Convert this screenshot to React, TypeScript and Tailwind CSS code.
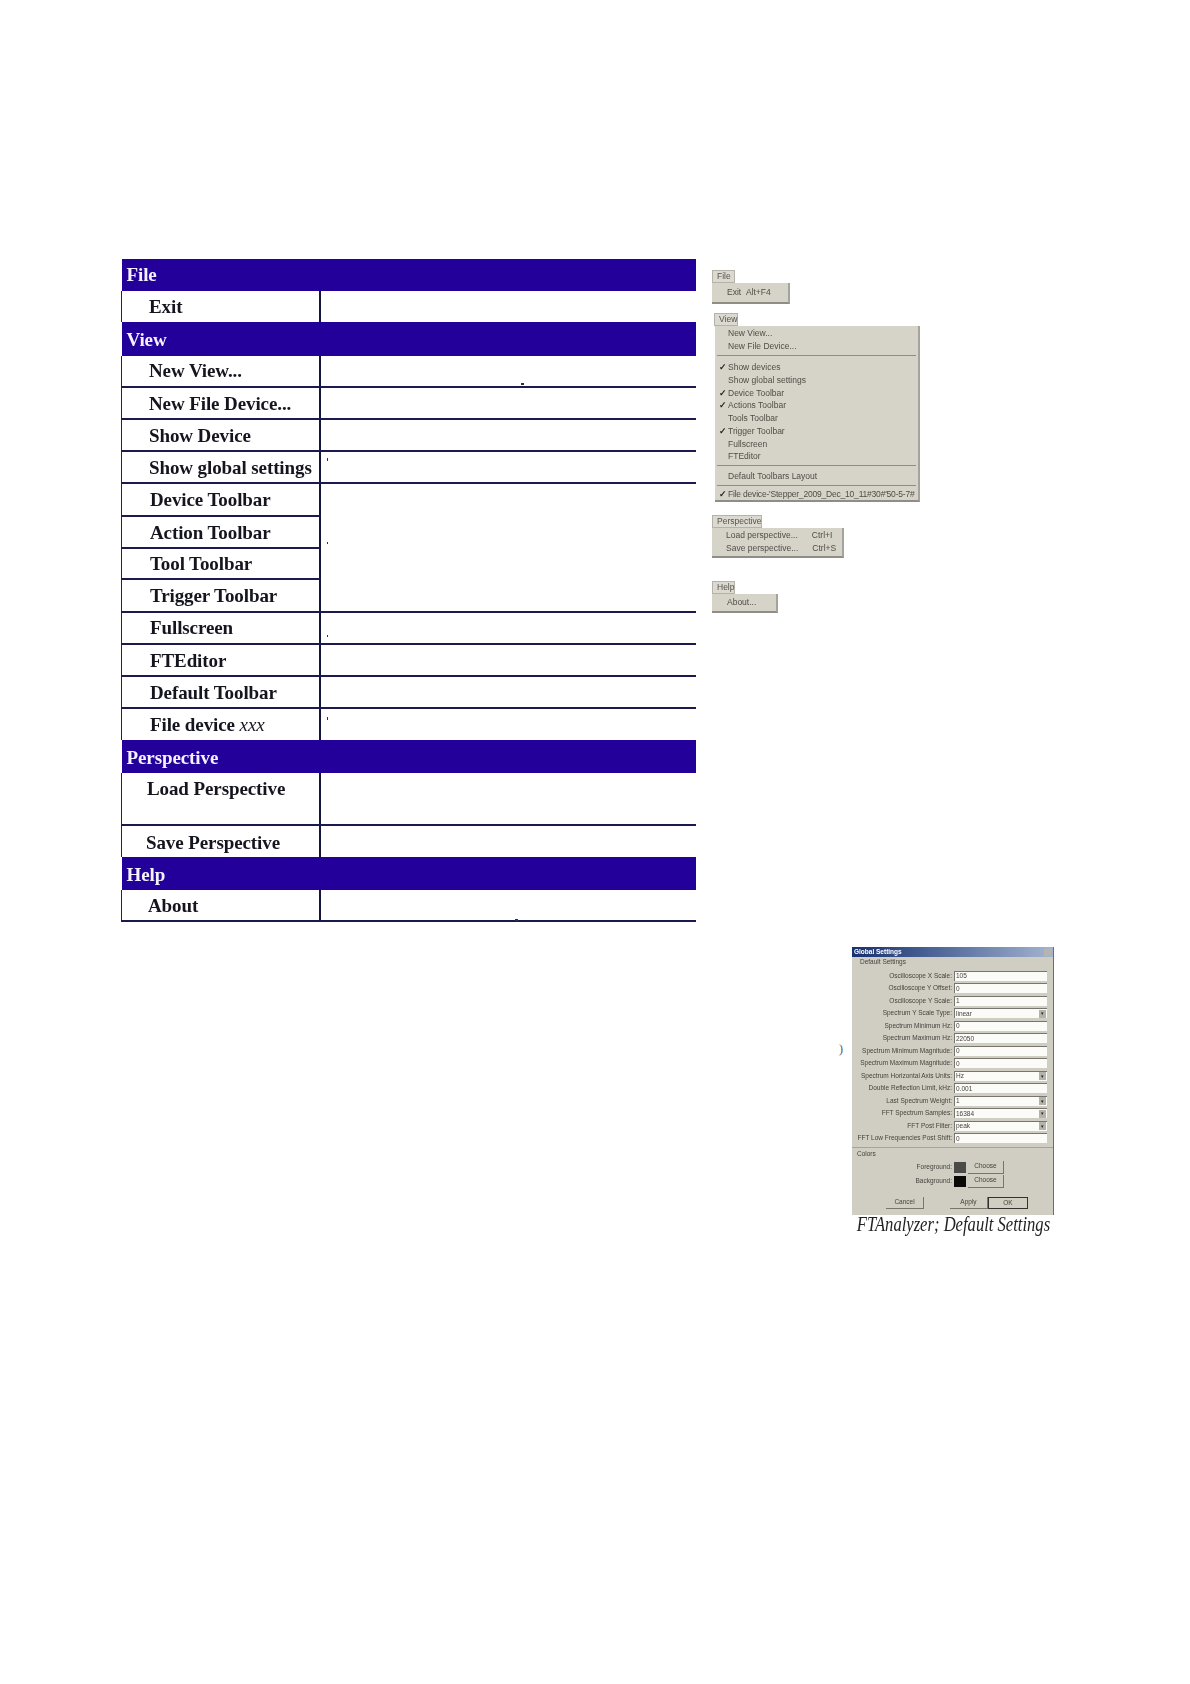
import React from "react";

const serif = "font-['Liberation_Serif',serif]";

type Row = { label: React.ReactNode; h: string; pad: string; header?: boolean; span?: number; skip?: boolean; line?: boolean; top?: boolean };

const rows: Row[] = [
  { label: "File", h: "h-[32px]", pad: "pl-[5px] pb-[2px]", header: true },
  { label: "Exit", h: "h-[31px]", pad: "pl-[27px]" },
  { label: "View", h: "h-[34px]", pad: "pl-[5px]", header: true },
  { label: "New View...", h: "h-[31px]", pad: "pl-[27px] pb-[2px]", line: true },
  { label: "New File Device...", h: "h-[32px]", pad: "pl-[27px]", line: true },
  { label: "Show Device", h: "h-[32px]", pad: "pl-[27px]", line: true },
  { label: "Show global settings", h: "h-[32px]", pad: "pl-[27px]", line: true },
  { label: "Device Toolbar", h: "h-[33px]", pad: "pl-[28px]", line: true, span: 4 },
  { label: "Action Toolbar", h: "h-[32px]", pad: "pl-[28px]", line: true, skip: true },
  { label: "Tool Toolbar", h: "h-[31px]", pad: "pl-[28px]", line: true, skip: true },
  { label: "Trigger Toolbar", h: "h-[33px]", pad: "pl-[28px]", line: true, skip: true },
  { label: "Fullscreen", h: "h-[32px]", pad: "pl-[28px] pb-[1px]", line: true },
  { label: "FTEditor", h: "h-[32px]", pad: "pl-[28px]", line: true },
  { label: "Default Toolbar", h: "h-[32px]", pad: "pl-[28px]", line: true },
  { label: <>File device <i className="font-normal">xxx</i></>, h: "h-[32px]", pad: "pl-[28px]" },
  { label: "Perspective", h: "h-[33px]", pad: "pl-[5px] pt-[2px]", header: true },
  { label: "Load Perspective", h: "h-[52px]", pad: "pl-[25px]", line: true, top: true },
  { label: "Save Perspective", h: "h-[32px]", pad: "pl-[24px] pt-[2px]" },
  { label: "Help", h: "h-[33px]", pad: "pl-[5px] pt-[2px]", header: true },
  { label: "About", h: "h-[31px]", pad: "pl-[26px] pt-[1px]", line: true },
];

function MenuTable() {
  return (
    <div className="relative">
      <table className={`w-[575px] table-fixed border-collapse whitespace-nowrap text-[19px] font-bold leading-none tracking-[-0.1px] text-[#15151f] blur-[0.5px] ${serif}`}>
        <colgroup>
          <col className="w-[198px]" />
          <col />
        </colgroup>
        <tbody>
          {rows.map((r, i) =>
            r.header ? (
              <tr key={i} className={r.h}>
                <td colSpan={2} className={`bg-[#24009a] text-[#f4f2ff] ${r.pad}`}>{r.label}</td>
              </tr>
            ) : (
              <tr key={i} className={r.h}>
                <td className={`border-l border-r-2 border-l-[#1e1880] border-r-[#14143c] ${r.line ? "border-b-2 border-b-[#1a1a50]" : ""} ${r.top ? "align-top pt-[6px]" : ""} ${r.pad}`}>
                  {r.label}
                </td>
                {!r.skip && (
                  <td rowSpan={r.span} className={r.line || r.span ? "border-b-2 border-b-[#1a1a50]" : ""} />
                )}
              </tr>
            )
          )}
        </tbody>
      </table>
      {/* scan specks */}
      <span className="absolute left-[400px] top-[124px] h-[2px] w-[3px] bg-[#333]" />
      <span className="absolute left-[206px] top-[199px] h-[3px] w-px bg-[#333]" />
      <span className="absolute left-[206px] top-[283px] h-[2px] w-px bg-[#333]" />
      <span className="absolute left-[206px] top-[376px] h-[2px] w-px bg-[#333]" />
      <span className="absolute left-[206px] top-[458px] h-[3px] w-px bg-[#333]" />
      <span className="absolute left-[394px] top-[660px] h-[2px] w-[3px] bg-[#333]" />
    </div>
  );
}

function Tab({ label, w }: { label: string; w: string }) {
  return (
    <div className={`flex h-[13px] items-center border border-[#b5b2aa] bg-[#dcd9d0] pl-[4px] text-[8.5px] text-[#55534e] ${w}`}>{label}</div>
  );
}

function Shot({ children, cls }: { children: React.ReactNode; cls: string }) {
  return (
    <div className={`border-b-2 border-r-2 border-b-[#8f8d86] border-r-[#a5a39c] bg-[#d6d3c9] text-[8.5px] leading-[12.7px] text-[#4f4d46] ${cls}`}>
      {children}
    </div>
  );
}

const viewGroup1 = ["New View...", "New File Device..."];
const viewGroup2: [string, boolean][] = [
  ["Show devices", true],
  ["Show global settings", false],
  ["Device Toolbar", true],
  ["Actions Toolbar", true],
  ["Tools Toolbar", false],
  ["Trigger Toolbar", true],
  ["Fullscreen", false],
  ["FTEditor", false],
];

function Item({ label, checked }: { label: string; checked?: boolean }) {
  return (
    <div className="relative h-[12.7px] whitespace-nowrap pl-[13px]">
      {checked && <span className="absolute left-[4px] top-0 text-[9px] font-bold text-[#222]">✓</span>}
      {label}
    </div>
  );
}

function Menus() {
  return (
    <div className="ml-[16px] flex w-[215px] flex-col whitespace-nowrap pt-[11px] font-['Liberation_Sans',sans-serif] blur-[0.7px]">
      <Tab label="File" w="w-[23px]" />
      <Shot cls="h-[21px] w-[78px] pl-[15px] pt-[3px]">Exit &nbsp;Alt+F4</Shot>

      <div className="mt-[9px] ml-[2px]">
        <Tab label="View" w="w-[24px]" />
      </div>
      <Shot cls="ml-[3px] h-[176px] w-[205px] overflow-hidden pt-[1px]">
        {viewGroup1.map((l) => (
          <Item key={l} label={l} />
        ))}
        <div className="mx-[2px] my-[3px] h-px bg-[#8e8c85]" />
        <div className="pt-[2px]">
          {viewGroup2.map(([l, c]) => (
            <Item key={l} label={l} checked={c} />
          ))}
        </div>
        <div className="mx-[2px] my-[2px] h-px bg-[#8e8c85]" />
        <div className="pt-[2px]">
          <Item label="Default Toolbars Layout" />
        </div>
        <div className="mx-[2px] my-[2px] h-px bg-[#8e8c85]" />
        <div className="tracking-[-0.2px]">
          <Item label="File device-'Stepper_2009_Dec_10_11#30#'50-5-7#" checked />
        </div>
      </Shot>

      <div className="mt-[13px]">
        <Tab label="Perspective" w="w-[50px]" />
      </div>
      <Shot cls="h-[30px] w-[132px] pl-[14px] pt-[1px]">
        <div className="flex gap-[14px]"><span>Load perspective...</span><span>Ctrl+I</span></div>
        <div className="flex gap-[14px]"><span>Save perspective...</span><span>Ctrl+S</span></div>
      </Shot>

      <div className="mt-[23px]">
        <Tab label="Help" w="w-[23px]" />
      </div>
      <Shot cls="h-[19px] w-[66px] pl-[15px] pt-[2px]">About...</Shot>
    </div>
  );
}

const fields: [string, string, boolean][] = [
  ["Oscilloscope X Scale:", "105", false],
  ["Oscilloscope Y Offset:", "0", false],
  ["Oscilloscope Y Scale:", "1", false],
  ["Spectrum Y Scale Type:", "linear", true],
  ["Spectrum Minimum Hz:", "0", false],
  ["Spectrum Maximum Hz:", "22050", false],
  ["Spectrum Minimum Magnitude:", "0", false],
  ["Spectrum Maximum Magnitude:", "0", false],
  ["Spectrum Horizontal Axis Units:", "Hz", true],
  ["Double Reflection Limit, kHz:", "0.001", false],
  ["Last Spectrum Weight:", "1", true],
  ["FFT Spectrum Samples:", "16384", true],
  ["FFT Post Filter:", "peak", true],
  ["FFT Low Frequencies Post Shift:", "0", false],
];

function Dialog() {
  return (
    <div className="ml-[852px] mt-[25px] w-[202px]">
      <div className="h-[268px] w-[202px] overflow-hidden border-r border-r-[#6d6c66] bg-[#d0cdc2] font-['Liberation_Sans',sans-serif] text-[6.5px] leading-none text-[#45433d] blur-[0.7px]">
        <div className="flex h-[10px] items-center justify-between bg-gradient-to-r from-[#17306f] to-[#a5b4d0] px-[2px] font-bold text-white">
          <span>Global Settings</span>
          <span className="h-[7px] w-[7px] bg-[#b7b4ac]" />
        </div>
        <div className="pl-[8px] pt-[2px]">Default Settings</div>
        <div className="pt-[4px]">
          {fields.map(([label, value, select]) => (
            <div key={label} className="flex h-[12.5px] items-center">
              <div className="w-[102px] whitespace-nowrap pr-[2px] text-right">{label}</div>
              <div className="flex h-[10px] w-[93px] items-center justify-between border-t border-l border-[#77756e] bg-[#fbfbf8] pl-[1px]">
                <span>{value}</span>
                {select && <span className="mr-[1px] flex h-[8px] w-[7px] items-center justify-center bg-[#b5b2a9] text-[5px] text-[#222]">▾</span>}
              </div>
            </div>
          ))}
        </div>
        <div className="mt-[2px] border-t border-t-[#a6a39a] pl-[5px] pt-[3px]">Colors</div>
        <div className="mt-[3px] flex h-[14px] items-center">
          <div className="w-[102px] pr-[2px] text-right">Foreground:</div>
          <span className="h-[11px] w-[12px] bg-[#4a4a48]" />
          <span className="ml-[2px] flex h-[13px] w-[36px] items-center justify-center border-b border-r border-[#77756e]">Choose</span>
        </div>
        <div className="flex h-[14px] items-center">
          <div className="w-[102px] pr-[2px] text-right">Background:</div>
          <span className="h-[11px] w-[12px] bg-[#0a0a0a]" />
          <span className="ml-[2px] flex h-[13px] w-[36px] items-center justify-center border-b border-r border-[#77756e]">Choose</span>
        </div>
        <div className="mt-[9px] flex h-[12px] items-center pl-[34px]">
          <span className="flex h-[12px] w-[38px] items-center justify-center border-b border-r border-[#77756e]">Cancel</span>
          <span className="ml-[26px] flex h-[12px] w-[38px] items-center justify-center border-b border-r border-[#77756e]">Apply</span>
          <span className="flex h-[12px] w-[40px] items-center justify-center border border-[#33322e]">OK</span>
        </div>
      </div>
      <div className="mt-[-2px] flex justify-center">
        <span className={`shrink-0 scale-x-[0.83] whitespace-nowrap text-[20px] italic leading-[22px] text-[#222] blur-[0.4px] ${serif}`}>FTAnalyzer; Default Settings</span>
      </div>
    </div>
  );
}

export default function App() {
  return (
    <div className="relative min-h-[1684px] w-[1190px] overflow-hidden bg-white pt-[259px]">
      <div className="flex pl-[121px]">
        <MenuTable />
        <Menus />
      </div>
      <Dialog />
      <span className={`absolute left-[839px] top-[1040px] text-[12px] text-[#555] ${serif}`}>)</span>
    </div>
  );
}
